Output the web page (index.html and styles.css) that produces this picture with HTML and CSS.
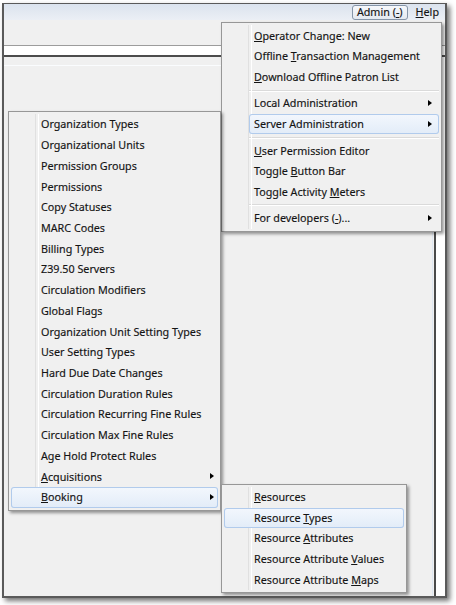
FILE: index.html
```html
<!DOCTYPE html>
<html>
<head>
<meta charset="utf-8">
<title>Admin menu</title>
<link rel="stylesheet" href="styles.css">
</head>
<body>
<div class="window">
  <div class="menubar">
    <span class="mb-item mb-open">Admin (<u>-</u>)</span>
    <span class="mb-item"><u>H</u>elp</span>
  </div>
  <div class="toolbar"></div>
  <div class="strip"></div>
  <div class="content">
    <div class="pane"><div class="pane-line"></div></div>
    <div class="sidebar"></div>
  </div>
</div>

<div class="menu menu-main">
  <div class="item"><span><u>O</u>perator Change: New</span></div>
  <div class="item"><span>Offline <u>T</u>ransaction Management</span></div>
  <div class="item"><span><u>D</u>ownload Offline Patron List</span></div>
  <div class="sep"></div>
  <div class="item sub"><span>Local Administration</span></div>
  <div class="item sub hl hl-gutter"><span>Server Administration</span></div>
  <div class="sep"></div>
  <div class="item"><span><u>U</u>ser Permission Editor</span></div>
  <div class="item"><span>Toggle <u>B</u>utton Bar</span></div>
  <div class="item"><span>Toggle Activity <u>M</u>eters</span></div>
  <div class="sep"></div>
  <div class="item sub"><span>For developers (<u>-</u>)...</span></div>
</div>

<div class="menu menu-server">
  <div class="item"><span>Organization Types</span></div>
  <div class="item"><span>Organizational Units</span></div>
  <div class="item"><span>Permission Groups</span></div>
  <div class="item"><span>Permissions</span></div>
  <div class="item"><span>Copy Statuses</span></div>
  <div class="item"><span>MARC Codes</span></div>
  <div class="item"><span>Billing Types</span></div>
  <div class="item"><span>Z39.50 Servers</span></div>
  <div class="item"><span>Circulation Modifiers</span></div>
  <div class="item"><span>Global Flags</span></div>
  <div class="item"><span>Organization Unit Setting Types</span></div>
  <div class="item"><span>User Setting Types</span></div>
  <div class="item"><span>Hard Due Date Changes</span></div>
  <div class="item"><span>Circulation Duration Rules</span></div>
  <div class="item"><span>Circulation Recurring Fine Rules</span></div>
  <div class="item"><span>Circulation Max Fine Rules</span></div>
  <div class="item"><span>Age Hold Protect Rules</span></div>
  <div class="item sub"><span><u>A</u>cquisitions</span></div>
  <div class="item sub hl"><span><u>B</u>ooking</span></div>
</div>

<div class="menu menu-booking">
  <div class="item"><span><u>R</u>esources</span></div>
  <div class="item hl"><span>Resource <u>T</u>ypes</span></div>
  <div class="item"><span>Resource <u>A</u>ttributes</span></div>
  <div class="item"><span>Resource Attribute <u>V</u>alues</span></div>
  <div class="item"><span>Resource Attribute <u>M</u>aps</span></div>
</div>
</body>
</html>
```

FILE: styles.css
```css
* { box-sizing: border-box; }

html, body {
  margin: 0;
  padding: 0;
}

body {
  width: 456px;
  height: 605px;
  overflow: hidden;
  position: relative;
  background: #ffffff;
  padding: 3px 0 0 2px;
  font-family: "Noto Sans", "Open Sans", sans-serif;
  font-size: 10.75px;
  color: #141414;
  -webkit-text-stroke: 0.15px #141414;
}

u {
  text-decoration: underline;
  text-underline-offset: 1px;
}

/* ---------- window ---------- */
.window {
  width: 445px;
  height: 595px;
  border: 2px solid #5a5a5a;
  border-top-width: 1px;
  background: #f0f0f0;
  box-shadow: 3px 3px 5px rgba(0, 0, 0, 0.55);
  display: flex;
  flex-direction: column;
}

.menubar {
  height: 16px;
  flex: none;
  background: linear-gradient(#dbe3ee, #ebeff5);
  display: flex;
  justify-content: flex-end;
  align-items: center;
  gap: 4px;
  padding-right: 2px;
}

.mb-item {
  height: 15px;
  line-height: 13px;
  padding: 0 3px;
  border: 1px solid transparent;
}

.mb-open {
  padding: 0 4px;
  border-color: #8595a8;
  border-radius: 3px;
  background: linear-gradient(#f6f8fb, #e4e9f0);
}

.toolbar {
  height: 25px;
  flex: none;
  background: #f0f0f0;
}

.strip {
  height: 12px;
  flex: none;
  background: #ffffff;
  border-top: 1px solid #9c9c9c;
  border-bottom: 2px solid #4c4c4c;
}

.content {
  flex: 1;
  display: flex;
}

.pane {
  flex: 1;
  border-right: 1px solid #dfe7f1;
  margin-right: 1px;
}

.pane-line {
  margin-top: 8px;
  height: 1px;
  background: #fafcfe;
}

.sidebar {
  width: 11px;
  flex: none;
  background: #ffffff;
  border-left: 2px solid #4a4a4a;
}

/* ---------- popup menus ---------- */
.menu {
  position: absolute;
  background: #f0f0f0;
  border: 1px solid #979797;
  padding: 2px;
  box-shadow: 2px 2px 3px rgba(0, 0, 0, 0.4);
}

.menu::before {
  content: "";
  position: absolute;
  top: 2px;
  bottom: 2px;
  left: 26px;
  width: 2px;
  border-left: 1px solid #e0e0e0;
  border-right: 1px solid #ffffff;
}

.menu-main {
  left: 221px;
  top: 22px;
  width: 221px;
  padding-top: 2.5px;
}

.menu-server {
  left: 8px;
  top: 111px;
  width: 213px;
}

.menu-booking {
  left: 221px;
  top: 484px;
  width: 186px;
}

.item {
  position: relative;
  height: 20.6px;
  display: flex;
  align-items: center;
  padding-left: 30px;
  white-space: nowrap;
}

.menu-server .item {
  height: 20.72px;
}

.item.sub::after {
  content: "";
  position: absolute;
  right: 4px;
  top: 50%;
  margin-top: -3.5px;
  border-left: 4px solid #000;
  border-top: 3.5px solid transparent;
  border-bottom: 3.5px solid transparent;
}

.menu-main .item.sub::after {
  right: 7px;
}

.item.hl {
  background: linear-gradient(#f3f7fd, #e2ecf8);
  box-shadow: inset 0 0 0 1px #b1cbec;
  border-radius: 3px;
}

.item.hl-gutter {
  margin-left: 25px;
  padding-left: 5px;
}

.sep {
  height: 5.9px;
  margin-left: 25px;
  display: flex;
  align-items: center;
}

.sep::before {
  content: "";
  flex: 1;
  height: 1px;
  background: #dadada;
  box-shadow: 0 1px 0 #ffffff;
}
```
